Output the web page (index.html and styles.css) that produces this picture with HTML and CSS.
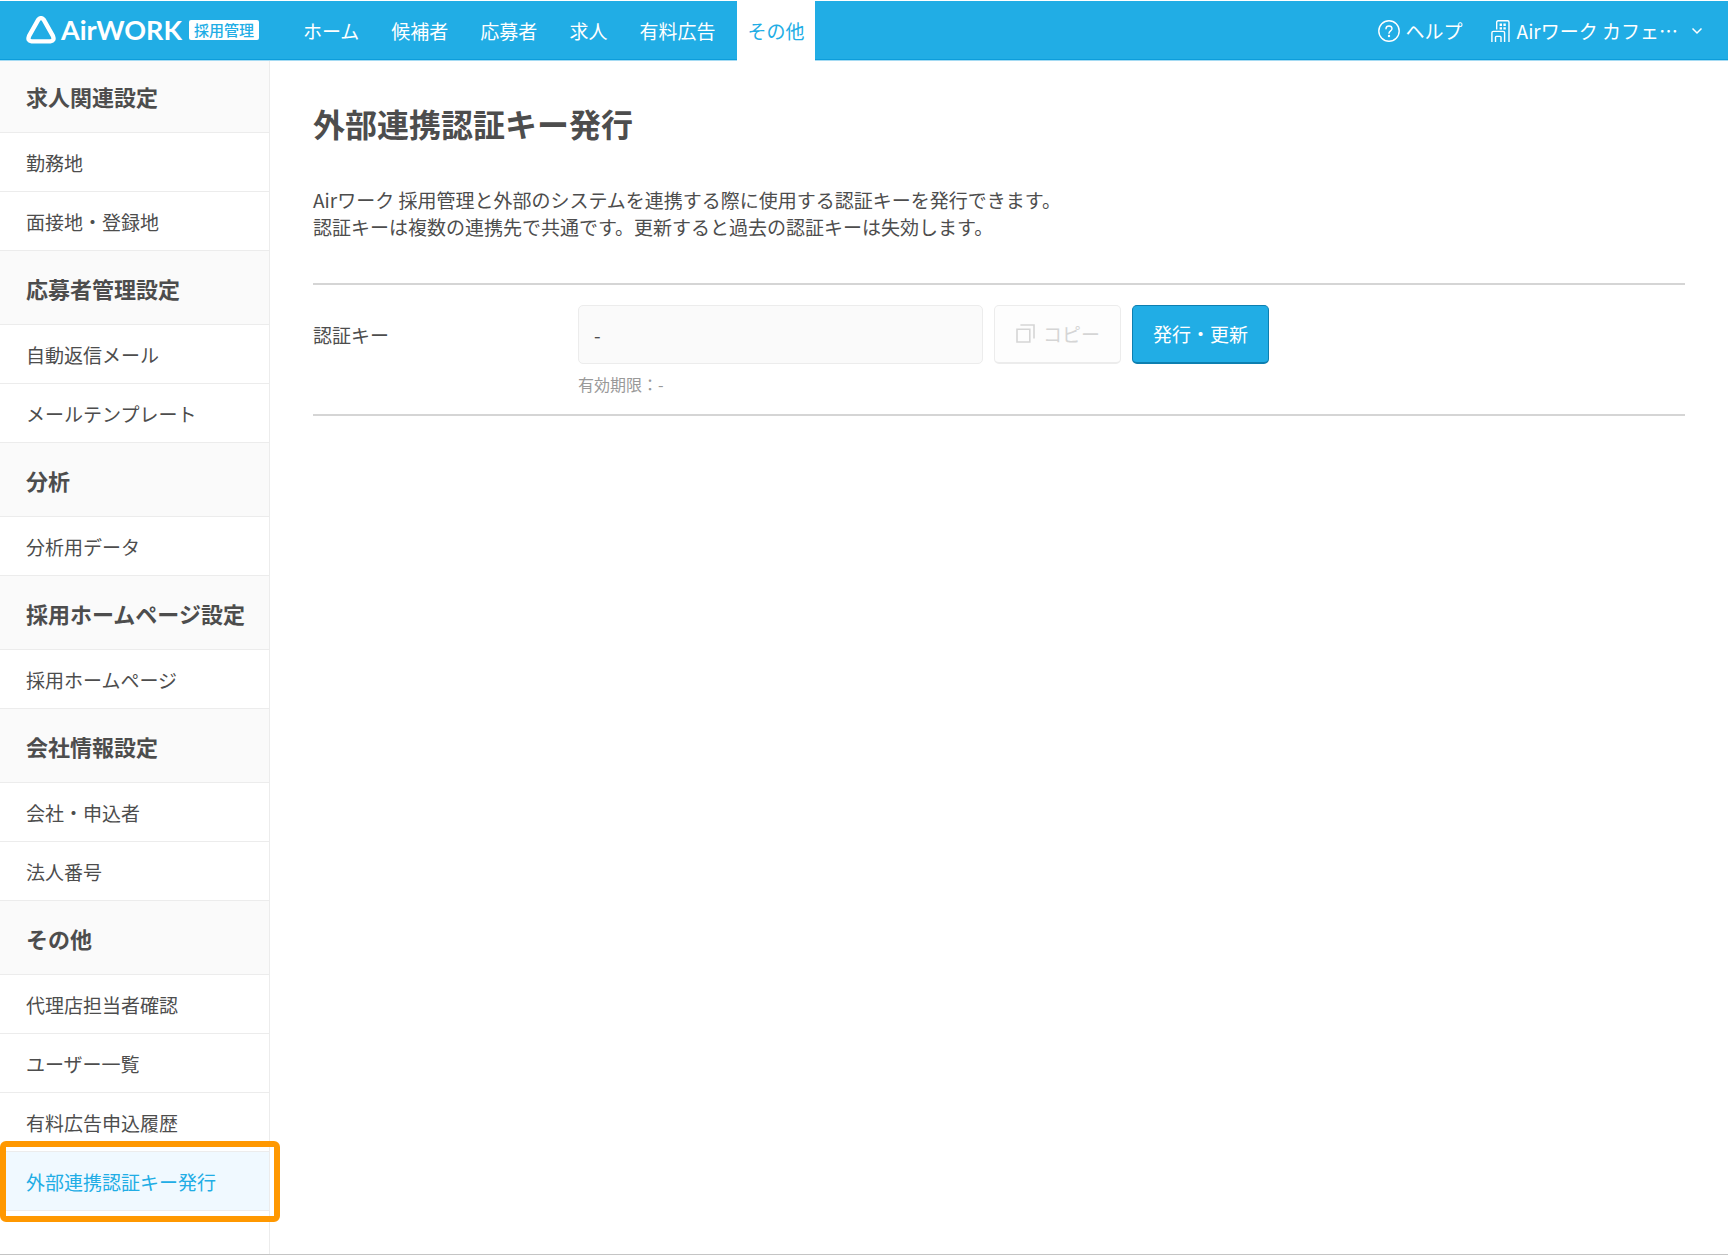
FILE: index.html
```html
<!DOCTYPE html>
<html lang="ja">
<head>
<meta charset="utf-8">
<meta name="viewport" content="width=device-width, initial-scale=1">
<title>外部連携認証キー発行 | AirWORK 採用管理</title>
<link rel="stylesheet" href="styles.css">
</head>
<body>
<header class="header">
  <a class="brand" href="#">
    <svg class="brand-mark" width="30" height="28" viewBox="0 0 30 28" aria-hidden="true"><path d="M12.3 3.7 3 20.2Q1.2 24.9 5.6 25.4H24.4Q28.8 24.9 27 20.2L17.7 3.7Q15 .5 12.3 3.7Z" fill="none" stroke="#fff" stroke-width="4.4" stroke-linejoin="round"/></svg>
    <span class="brand-name">AirWORK</span>
    <span class="brand-badge">採用管理</span>
  </a>
  <nav class="nav">
    <a class="nav-link" href="#">ホーム</a>
    <a class="nav-link" href="#">候補者</a>
    <a class="nav-link" href="#">応募者</a>
    <a class="nav-link" href="#">求人</a>
    <a class="nav-link" href="#">有料広告</a>
    <a class="nav-link nav-link-active" href="#" aria-current="page">その他</a>
  </nav>
  <div class="tools">
    <a class="tool" href="#">
      <svg width="22" height="22" viewBox="0 0 22 22" fill="none" stroke="#fff" stroke-width="1.4" stroke-linecap="round" aria-hidden="true"><circle cx="11" cy="11" r="10.2"/><path d="M8 8.7C8 5 14 5 14 8.7 14 10.8 11 10.9 11 13.3"/><circle cx="11" cy="16" r=".5" fill="#fff"/></svg>
      ヘルプ
    </a>
    <button class="tool" type="button">
      <svg width="20" height="22" viewBox="0 0 20 22" fill="none" stroke="#fff" stroke-width="1.4" aria-hidden="true"><path d="M5.7 9.5V2.2Q5.7.8 7.1.8H16.6Q18 .8 18 2.2V22M.9 22V12.8Q.9 11.4 2.3 11.4H12.2Q13.6 11.4 13.6 12.8V22M4.5 22V17.2Q4.5 16.4 5.3 16.4H9.2Q10 16.4 10 17.2V22"/><path d="M8.6 4.8H11M12.4 4.8H14.8M8.6 8.4H11M12.4 8.4H14.8" stroke-width="2.4"/></svg>
      <span>Airワーク カフェ…</span>
      <svg class="chevron" width="12" height="8" viewBox="0 0 12 8" fill="none" stroke="#fff" stroke-width="1.5" aria-hidden="true"><path d="M1.5 1.5 6 6l4.5-4.5"/></svg>
    </button>
  </div>
</header>
<div class="layout">
  <nav class="sidebar" aria-label="設定">
    <h2 class="group">求人関連設定</h2>
    <a class="item" href="#">勤務地</a>
    <a class="item" href="#">面接地・登録地</a>
    <h2 class="group">応募者管理設定</h2>
    <a class="item" href="#">自動返信メール</a>
    <a class="item" href="#">メールテンプレート</a>
    <h2 class="group">分析</h2>
    <a class="item" href="#">分析用データ</a>
    <h2 class="group">採用ホームページ設定</h2>
    <a class="item" href="#">採用ホームページ</a>
    <h2 class="group">会社情報設定</h2>
    <a class="item" href="#">会社・申込者</a>
    <a class="item" href="#">法人番号</a>
    <h2 class="group">その他</h2>
    <a class="item" href="#">代理店担当者確認</a>
    <a class="item" href="#">ユーザー一覧</a>
    <a class="item" href="#">有料広告申込履歴</a>
    <a class="item item-active" href="#" aria-current="page">外部連携認証キー発行</a>
  </nav>
  <main class="main">
    <h1 class="title">外部連携認証キー発行</h1>
    <p class="lead">Airワーク 採用管理と外部のシステムを連携する際に使用する認証キーを発行できます。<br>認証キーは複数の連携先で共通です。更新すると過去の認証キーは失効します。</p>
    <form class="key-row">
      <label class="key-label" for="auth-key">認証キー</label>
      <div class="key-body">
        <div class="key-controls">
          <input class="key-input" id="auth-key" type="text" value="-" readonly>
          <button class="button button-copy" type="button" disabled>
            <svg width="19" height="19" viewBox="0 0 19 19" fill="none" stroke="currentColor" stroke-width="1.6" aria-hidden="true"><path d="M1 5.2H13.8V18H1ZM4.4 1H18V14.4"/></svg>
            コピー
          </button>
          <button class="button button-primary" type="button">発行・更新</button>
        </div>
        <p class="key-hint">有効期限：-</p>
      </div>
    </form>
  </main>
</div>
</body>
</html>
```

FILE: styles.css
```css
* {
  box-sizing: border-box;
}

body {
  margin: 0;
  min-height: 100vh;
  display: flex;
  flex-direction: column;
  border-bottom: 1px solid #c4c4c4;
  background: #fff;
  color: #4d4d4d;
  font: 19px/27px "Noto Sans CJK JP", sans-serif;
}

a {
  color: inherit;
  text-decoration: none;
}

h1,
h2,
p {
  margin: 0;
}

button,
input {
  font: inherit;
}

.header {
  position: relative;
  display: flex;
  height: 60px;
  padding: 0 25px 0 26px;
  border-top: 1px solid #fff;
  border-bottom: 1px solid #0d9ddb;
  background: #21ade5;
  box-shadow: 0 1px #a5dbf3;
  color: #fff;
}

.brand {
  display: flex;
  align-items: center;
  margin-right: 34px;
}

.brand-name {
  margin: 0 7px 0 5px;
  font: bold 27px/30px Lato, sans-serif;
}

.brand-badge {
  width: 70px;
  border-radius: 2px;
  background: #fff;
  color: #21ade5;
  font-size: 15px;
  font-weight: 500;
  line-height: 20px;
  text-align: center;
}

.nav {
  display: flex;
  gap: 11px;
  margin-bottom: -2px;
}

.nav-link {
  display: flex;
  align-items: center;
  padding: 0 11px 2px 10px;
}

.nav-link-active {
  background: #fff;
  color: #21ade5;
}

.tools {
  display: flex;
  gap: 28px;
  margin-left: auto;
}

.tool {
  display: flex;
  align-items: center;
  gap: 6px;
  padding: 1px 0 0;
  border: 0;
  background: none;
  color: #fff;
}

.chevron {
  margin-left: 7px;
}

.layout {
  display: flex;
  flex: 1;
}

.sidebar {
  flex: 0 0 270px;
  border-right: 1px solid #ececec;
}

.group {
  padding: 22px 0 20px 26px;
  border-top: 1px solid #ececec;
  border-bottom: 1px solid #ececec;
  margin-top: -1px;
  background: #fafafa;
  font-size: 22px;
  font-weight: 700;
  line-height: 31px;
  white-space: nowrap;
}

.group:first-child {
  margin-top: 0;
  padding-top: 21px;
  border-top: 0;
}

.item {
  display: block;
  padding: 17px 0 15px 26px;
  border-bottom: 1px solid #ececec;
  line-height: 26px;
}

.item-active {
  position: relative;
  background: #f0f9ff;
  color: #21ade5;
}

.item-active::after {
  content: "";
  position: absolute;
  inset: -11px -11px -12px 0;
  border: 6px solid #ff9800;
  border-radius: 6px;
}

.main {
  flex: 1;
  padding: 41px 43px;
}

.title {
  margin-bottom: 41px;
  font-size: 32px;
  line-height: 44px;
}

.lead {
  margin-bottom: 43px;
}

.key-row {
  display: flex;
  padding: 20px 0 16px;
  border: solid #d5d5d5;
  border-width: 2px 0;
}

.key-label {
  flex: 0 0 265px;
  padding-top: 16px;
}

.key-body {
  flex: 1;
}

.key-controls {
  display: flex;
  gap: 11px;
}

.key-input {
  width: 405px;
  height: 59px;
  padding: 0 15px;
  border: 1px solid #ececec;
  border-radius: 5px;
  background: #fafafa;
  color: #4d4d4d;
}

.button {
  display: flex;
  align-items: center;
  justify-content: center;
  gap: 8px;
  height: 59px;
  padding: 0 20px 2px 21px;
  border: 1px solid;
  border-bottom-width: 2px;
  border-radius: 5px;
}

.button-copy {
  border-color: #ececec;
  background: #fdfdfd;
  color: #d5d5d5;
}

.button-primary {
  padding-left: 20px;
  border-color: #0d7fb0;
  background: #21ade5;
  color: #fff;
}

.key-hint {
  margin-top: 7px;
  color: #999;
  font-size: 16px;
}
```
